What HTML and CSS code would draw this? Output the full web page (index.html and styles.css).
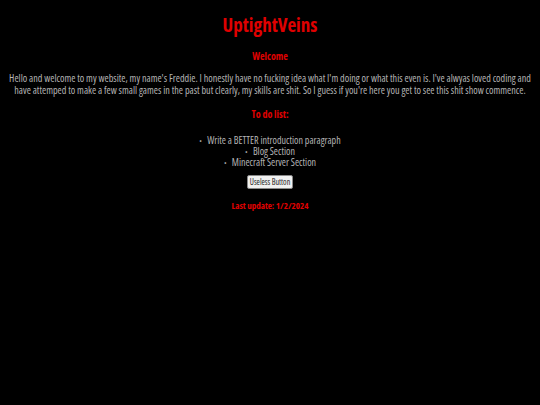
FILE: index.html
```html
<!DOCTYPE html>
<html>
<head>
<meta charset="utf-8">
<link rel="stylesheet" href="styles.css">
</head>
<body>
<div class="page">
  <h1 class="title">UptightVeins</h1>
  <h2 class="heading">Welcome</h2>
  <p class="intro">Hello and welcome to my website, my name's Freddie. I honestly have no fucking idea what I'm doing or what this even is. I've alwyas loved coding and have attemped to make a few small games in the past but clearly, my skills are shit. So I guess if you're here you get to see this shit show commence.</p>
  <h2 class="heading todo">To do list:</h2>
  <ul class="list">
    <li>Write a BETTER introduction paragraph</li>
    <li>Blog Section</li>
    <li>Minecraft Server Section</li>
  </ul>
  <button class="btn">Useless Button</button>
  <p class="update">Last update: 1/2/2024</p>
</div>
</body>
</html>
```
FILE: styles.css
```css
html, body {
  margin: 0;
  padding: 0;
  background: #000;
}
.page {
  padding: 8px 8px;
  text-align: center;
  font-family: "Open Sans", sans-serif;
  font-stretch: condensed;
  color: #b4b4b4;
}
.title {
  margin: 6px 0 0;
  font-size: 19px;
  line-height: 22px;
  color: #e00000;
  font-weight: bold;
}
.heading {
  margin: 14px 0 0;
  font-size: 10px;
  line-height: 12px;
  color: #e00000;
  font-weight: bold;
}
.intro {
  margin: 10px 0 0;
  font-size: 10.1px;
  line-height: 12px;
}
.todo {
  margin-top: 12px;
}
.list {
  margin: 15px 0 0;
  padding: 0;
  list-style: disc inside;
  font-size: 10px;
  line-height: 11px;
}
.list li {
  height: 11px;
}
.list li::marker {
  content: "\2022\00a0\00a0\00a0\00a0";
  font-size: 7px;
  color: #a0a0a0;
}
.btn {
  margin-top: 7px;
  font-family: "Open Sans", sans-serif;
  font-stretch: condensed;
  font-size: 8px;
  line-height: 10px;
  padding: 1px 2px;
  background: #f0f0f0;
  border: 1px solid #888;
  border-radius: 2px;
  color: #222;
}
.update {
  margin: 9px 0 0;
  font-size: 9px;
  font-weight: bold;
  color: #e00000;
}
```
